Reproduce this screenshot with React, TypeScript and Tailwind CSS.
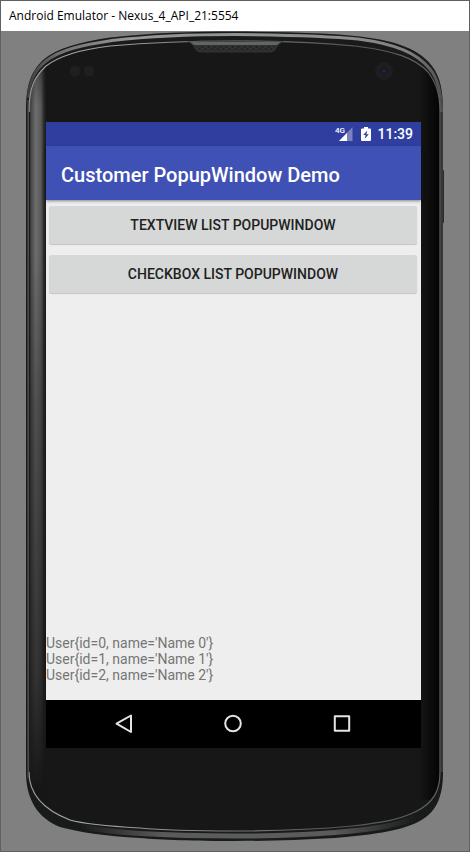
import React from "react";

const users = [
  { id: 0, name: "Name 0" },
  { id: 1, name: "Name 1" },
  { id: 2, name: "Name 2" },
];

const OUTER =
  "M26 112 C26 84 31 72 43 60 C57 48 80 42 110 37.500 C150 33 195 31.500 235 31.500 C290 32 330 33 360 36.500 C398 41 420 50 432 66 C441 78 443 92 443 112 V772 C443 798 436 813 418 822 C402 830 380 834 335 838 C300 840 270 841 235 841 C195 841 160 840 140 838 C105 836 78 832 60 827 C38 818 26 800 26 772 Z";
const FACE =
  "M29 112 C29 88 34 77 46 66 C62 54 84 49 110 46 C150 42.500 195 41 235 41 C285 41 325 43 355 46 C395 51 415 58 428 72 C437 84 440 95 440 112 V772 C440 790 434 803 415 812 C398 820 380 823 352 826 C310 830 270 831 235 831 C195 831 160 830 140 828 C105 826 84 824 70 820 C44 810 29 794 29 772 Z";
const TOP_GLOSS =
  "M28 98 C30 78 36 69 46 61 C60 50 82 45 112 40.500 C152 36 195 34.500 235 34.500 C290 35 328 36 358 39 C396 44 417 53 430 69 C439 80 441.500 94 441.500 112";
const BOTTOM_GLOSS =
  "M80 826 C100 831 120 832 140 833.500 C165 835 195 836 235 836 C270 836 305 835 335 832.500 C375 829 400 825 416 817";

function PhoneBody() {
  return (
    <svg
      className="absolute inset-0 h-full w-full"
      viewBox="26 31 418 811"
      preserveAspectRatio="none"
      aria-hidden="true"
    >
      <defs>
        <linearGradient id="line" gradientUnits="userSpaceOnUse" x1="26" y1="0" x2="443" y2="0">
          <stop offset="0" stopColor="#909395" />
          <stop offset="0.1" stopColor="#a8abad" />
          <stop offset="0.25" stopColor="#94989c" />
          <stop offset="0.5" stopColor="#77797c" />
          <stop offset="0.75" stopColor="#55575a" />
          <stop offset="1" stopColor="#606162" />
        </linearGradient>
        <linearGradient id="gloss" gradientUnits="userSpaceOnUse" x1="26" y1="0" x2="443" y2="0">
          <stop offset="0" stopColor="#3a3a3a" />
          <stop offset="0.08" stopColor="#707070" />
          <stop offset="0.25" stopColor="#969696" />
          <stop offset="0.75" stopColor="#8e8e8e" />
          <stop offset="0.92" stopColor="#808080" />
          <stop offset="1" stopColor="#4c4c4c" />
        </linearGradient>
        <linearGradient id="lowGloss" gradientUnits="userSpaceOnUse" x1="80" y1="0" x2="416" y2="0">
          <stop offset="0" stopColor="#5a5b5c" stopOpacity="0" />
          <stop offset="0.25" stopColor="#5a5b5c" />
          <stop offset="0.75" stopColor="#5a5b5c" />
          <stop offset="1" stopColor="#5a5b5c" stopOpacity="0" />
        </linearGradient>
        <linearGradient id="bevel" gradientUnits="userSpaceOnUse" x1="29" y1="0" x2="46" y2="0">
          <stop offset="0" stopColor="#3a3a3a" />
          <stop offset="0.4" stopColor="#787878" />
          <stop offset="0.7" stopColor="#606060" />
          <stop offset="0.85" stopColor="#343434" />
          <stop offset="1" stopColor="#161616" />
        </linearGradient>
        <linearGradient id="fade" gradientUnits="userSpaceOnUse" x1="0" y1="60" x2="0" y2="830">
          <stop offset="0" stopColor="#161616" stopOpacity="0.5" />
          <stop offset="0.06" stopColor="#161616" stopOpacity="0.1" />
          <stop offset="0.25" stopColor="#161616" stopOpacity="0.1" />
          <stop offset="0.45" stopColor="#161616" stopOpacity="0.4" />
          <stop offset="0.8" stopColor="#161616" stopOpacity="0.7" />
          <stop offset="0.95" stopColor="#161616" stopOpacity="1" />
        </linearGradient>
        <linearGradient id="shade" gradientUnits="userSpaceOnUse" x1="418" y1="0" x2="440" y2="0">
          <stop offset="0" stopColor="#000000" stopOpacity="0" />
          <stop offset="1" stopColor="#000000" stopOpacity="0.85" />
        </linearGradient>
        <pattern id="mesh" width="6" height="4" patternUnits="userSpaceOnUse">
          <rect width="6" height="4" fill="#303030" />
          <circle cx="1.500" cy="1" r="0.900" fill="#1c1c1c" />
          <circle cx="4.500" cy="3" r="0.900" fill="#1c1c1c" />
        </pattern>
        <clipPath id="face">
          <path d={FACE} />
        </clipPath>
      </defs>
      <path d="M442 168 L444 171 L444 222 L442 225 Z" fill="#2a2a2a" />
      <path d={OUTER} fill="#191a1a" />
      <path d={TOP_GLOSS} fill="none" stroke="url(#gloss)" strokeWidth="3" />
      <path d={BOTTOM_GLOSS} fill="none" stroke="url(#lowGloss)" strokeWidth="5" />
      <path d={FACE} fill="#171717" />
      <g clipPath="url(#face)">
        <rect x="29" y="60" width="17" height="772" fill="url(#bevel)" />
        <rect x="29" y="60" width="17" height="772" fill="url(#fade)" />
        <rect x="418" y="60" width="22" height="740" fill="url(#shade)" />
      </g>
      <path d={FACE} fill="none" stroke="url(#line)" strokeWidth="1.200" />
      <path d="M28 100 V778" stroke="#555555" strokeWidth="1" />
      <path d="M29.500 112 V772" stroke="#1c1c1c" strokeWidth="1.500" />
      <path d="M442 110 V772" stroke="#555657" strokeWidth="1" />
      <path d="M187 41.500 L284 41.500 Q279 43 276 49 Q274 52.500 270 52.500 L201 52.500 Q197 52.500 195 49 Q192 43 187 41.500 Z" fill="#303132" />
      <path d="M190 42 H281 L277 45 H194 Z" fill="#626466" />
      <path d="M196 46 H275 L272 51 H200 Z" fill="url(#mesh)" />
      <circle cx="75" cy="71" r="5.500" fill="#1f1f1f" />
      <circle cx="89" cy="71" r="5.500" fill="#1f1f1f" />
      <circle cx="384" cy="71" r="9" fill="#1e1e1f" />
      <circle cx="384" cy="71" r="4" fill="#1a1a24" />
      <circle cx="384" cy="71" r="1.500" fill="#26264a" />
    </svg>
  );
}

function StatusBar() {
  return (
    <div className="flex h-6 items-center justify-end bg-[#303f9f] pr-2 text-white">
      <svg className="mr-2 h-4 w-[18px]" viewBox="0 0 18 16" aria-hidden="true">
        <path d="M17.500 1 V15 H4 Z" fill="#fff" fillOpacity="0.35" />
        <path d="M12 7 V15 H4 Z" fill="#fff" />
        <path d="M0 0 H9 V8 H0 Z" fill="#303f9f" />
        <text x="0" y="7" fill="#fff" fontSize="8" fontWeight="500" fontFamily="Roboto, sans-serif">
          4G
        </text>
      </svg>
      <svg className="mr-[6px] h-4 w-[10px]" viewBox="0 0 10 16" aria-hidden="true">
        <path d="M3 1 H7 V2.500 H9 Q10 2.500 10 3.500 V14 Q10 15 9 15 H1 Q0 15 0 14 V3.500 Q0 2.500 1 2.500 H3 Z" fill="#fff" />
        <path d="M6.300 4.500 L2.200 9 H4.600 L3.600 13 L7.800 8.300 H5.400 Z" fill="#303f9f" />
      </svg>
      <span className="text-[14px] leading-6 font-medium">11:39</span>
    </div>
  );
}

function ListButton({ children }: { children: React.ReactNode }) {
  return (
    <button
      type="button"
      className="h-[38px] w-full rounded-xs bg-[#d6d8d7] pt-px text-[14px] font-medium text-[#212121] uppercase shadow-[0_1px_1px_rgba(0,0,0,0.18)]"
    >
      {children}
    </button>
  );
}

function NavBar() {
  return (
    <nav className="flex h-12 items-center justify-center gap-[85px] bg-black pr-[2px]">
      <button type="button" aria-label="Back" className="size-6">
        <svg viewBox="0 0 24 24" fill="none" stroke="#e4e4e4" strokeWidth="2" strokeLinejoin="round">
          <path d="M19 3.500 V20 L4.500 11.700 Z" />
        </svg>
      </button>
      <button type="button" aria-label="Home" className="size-6">
        <svg viewBox="0 0 24 24" fill="none" stroke="#e4e4e4" strokeWidth="2">
          <circle cx="12" cy="11.500" r="7.800" />
        </svg>
      </button>
      <button type="button" aria-label="Overview" className="size-6">
        <svg viewBox="0 0 24 24" fill="none" stroke="#e4e4e4" strokeWidth="2" strokeLinejoin="round">
          <rect x="4.800" y="4.300" width="14.400" height="14.400" />
        </svg>
      </button>
    </nav>
  );
}

export default function App() {
  return (
    <div className="flex min-h-screen flex-col border border-[#606060] bg-[#808080]">
      <header className="flex h-[30px] items-center bg-white pl-2 font-['Open_Sans','Noto_Sans',sans-serif] text-[12px] text-black">
        Android Emulator - Nexus_4_API_21:5554
      </header>
      <main className="flex grow flex-col px-[25px] pb-[9px] font-[Roboto,sans-serif]">
        <div className="relative grow px-5 pt-[91px] pb-[93px]">
          <PhoneBody />
          <div className="relative mr-[3px] flex h-full flex-col bg-[#eeeeee]">
            <StatusBar />
            <h1 className="flex h-[54px] items-center bg-[#3f51b5] px-[15px] pt-1 text-[20px] font-medium text-white shadow-[0_1px_3px_rgba(0,0,0,0.45)]">
              Customer PopupWindow Demo
            </h1>
            <div className="flex flex-col gap-[11px] pt-[6px] pr-1 pl-[3px]">
              <ListButton>TextView List PopupWindow</ListButton>
              <ListButton>CheckBox List PopupWindow</ListButton>
            </div>
            <ul className="mt-auto pt-[342px] pb-[17px] text-[14px] leading-4 text-[#757575]">
              {users.map((user) => (
                <li key={user.id}>{`User{id=${user.id}, name='${user.name}'}`}</li>
              ))}
            </ul>
            <NavBar />
          </div>
        </div>
      </main>
    </div>
  );
}
